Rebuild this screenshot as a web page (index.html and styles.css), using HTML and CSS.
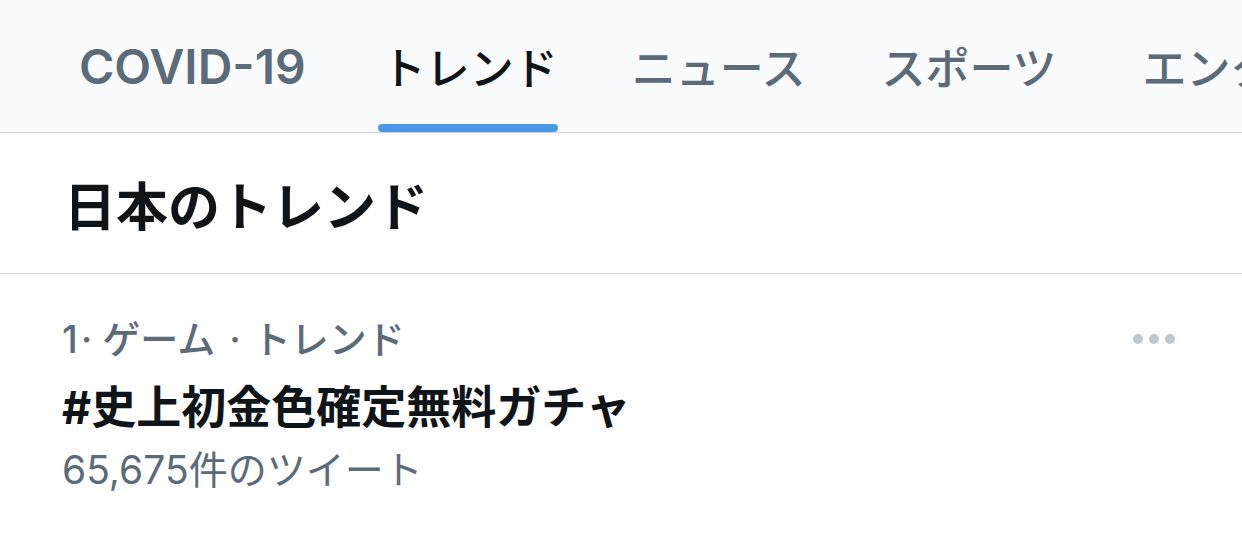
FILE: index.html
```html
<!DOCTYPE html>
<html lang="ja">
<head>
<meta charset="utf-8">
<link rel="stylesheet" href="styles.css">
</head>
<body>
<div class="page">
  <nav class="tabs">
    <div class="tab"><span class="tab-label latin">COVID-19</span></div>
    <div class="tab active"><span class="tab-label">トレンド</span><span class="indicator"></span></div>
    <div class="tab"><span class="tab-label">ニュース</span></div>
    <div class="tab"><span class="tab-label">スポーツ</span></div>
    <div class="tab last"><span class="tab-label">エンターテインメント</span></div>
  </nav>
  <header class="section-title">日本のトレンド</header>
  <div class="trend">
    <div class="trend-body">
      <div class="trend-meta"><span>1</span><span class="sep first">·</span><span>ゲーム</span><span class="sep">·</span><span>トレンド</span></div>
      <div class="trend-name">#史上初金色確定無料ガチャ</div>
      <div class="trend-count">65,675件のツイート</div>
    </div>
    <div class="more">
      <span class="dot"></span><span class="dot"></span><span class="dot"></span>
    </div>
  </div>
</div>
</body>
</html>
```

FILE: styles.css
```css
html, body {
  margin: 0;
  padding: 0;
  background: #ffffff;
  overflow: hidden;
}
body {
  width: 1242px;
  height: 555px;
  font-family: "Inter", "Noto Sans CJK JP", sans-serif;
  color: #0f1419;
}
.page {
  width: 1242px;
}
.tabs {
  display: flex;
  height: 132px;
  background: #fafbfc;
  border-bottom: 1px solid #c9d6df;
  padding-left: 41px;
  white-space: nowrap;
  overflow: hidden;
}
.tab {
  display: flex;
  flex-direction: column;
  padding: 0 38px;
  flex-shrink: 0;
}
.tab.active {
  padding: 0 36px 0 38px;
}
.tab.last {
  padding-left: 48px;
}
.tab-label {
  flex: 1;
  display: flex;
  align-items: center;
  justify-content: center;
  padding-top: 8px;
  padding-bottom: 8px;
  font-size: 44px;
  font-weight: 500;
  color: #5b6b79;
}
.tab-label.latin {
  font-size: 48px;
  font-weight: 600;
}
.tab.active .tab-label {
  color: #0f1419;
  padding-bottom: 0;
}
.indicator {
  height: 8px;
  border-radius: 4px;
  background: #4a99e9;
  margin: 0 0 0 -4px;
}
.section-title {
  height: 140px;
  display: flex;
  align-items: center;
  padding-left: 64px;
  font-size: 52px;
  font-weight: 700;
  color: #0f1419;
  border-bottom: 1px solid #d6dde2;
}
.trend {
  display: flex;
  justify-content: space-between;
  padding: 41px 67px 0 62px;
}
.trend-meta {
  display: flex;
  align-items: center;
  font-size: 38px;
  line-height: 48px;
  color: #5b6b79;
  font-weight: 500;
}
.sep {
  margin: 0 12px 0 14px;
}
.sep.first {
  margin: 0 10px 0 3px;
}
.trend-name {
  margin-top: 15px;
  font-size: 45px;
  line-height: 60px;
  font-weight: 700;
  color: #0f1419;
}
.trend-count {
  font-size: 39px;
  line-height: 64px;
  color: #5b6b79;
}
.more {
  display: flex;
  gap: 6px;
  height: 48px;
  align-items: center;
}
.dot {
  width: 10px;
  height: 10px;
  border-radius: 50%;
  background: #bcc8d2;
}
```
